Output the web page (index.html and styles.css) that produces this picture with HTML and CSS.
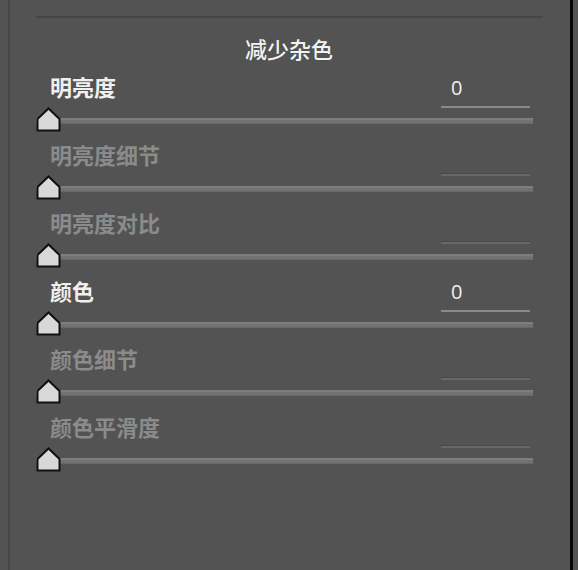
FILE: index.html
```html
<!DOCTYPE html>
<html lang="zh">
<head>
<meta charset="utf-8">
<link rel="stylesheet" href="styles.css">
</head>
<body>
<div class="frame">
  <div class="edge-left"></div>
  <div class="panel">
    <div class="sep"></div>
    <div class="title">减少杂色</div>

    <div class="row">
      <div class="head"><span class="label">明亮度</span><span class="field">0</span></div>
      <div class="slider"><div class="track"></div><svg class="thumb" viewBox="0 0 25 25" width="25" height="25"><path d="M1.5 23.5 V12 L12.5 1.5 L23.5 12 V23.5 Z" fill="#d8d8d8" stroke="#111" stroke-width="2"/></svg></div>
    </div>

    <div class="row off">
      <div class="head"><span class="label">明亮度细节</span><span class="field"></span></div>
      <div class="slider"><div class="track"></div><svg class="thumb" viewBox="0 0 25 25" width="25" height="25"><path d="M1.5 23.5 V12 L12.5 1.5 L23.5 12 V23.5 Z" fill="#d8d8d8" stroke="#111" stroke-width="2"/></svg></div>
    </div>

    <div class="row off">
      <div class="head"><span class="label">明亮度对比</span><span class="field"></span></div>
      <div class="slider"><div class="track"></div><svg class="thumb" viewBox="0 0 25 25" width="25" height="25"><path d="M1.5 23.5 V12 L12.5 1.5 L23.5 12 V23.5 Z" fill="#d8d8d8" stroke="#111" stroke-width="2"/></svg></div>
    </div>

    <div class="row">
      <div class="head"><span class="label">颜色</span><span class="field">0</span></div>
      <div class="slider"><div class="track"></div><svg class="thumb" viewBox="0 0 25 25" width="25" height="25"><path d="M1.5 23.5 V12 L12.5 1.5 L23.5 12 V23.5 Z" fill="#d8d8d8" stroke="#111" stroke-width="2"/></svg></div>
    </div>

    <div class="row off">
      <div class="head"><span class="label">颜色细节</span><span class="field"></span></div>
      <div class="slider"><div class="track"></div><svg class="thumb" viewBox="0 0 25 25" width="25" height="25"><path d="M1.5 23.5 V12 L12.5 1.5 L23.5 12 V23.5 Z" fill="#d8d8d8" stroke="#111" stroke-width="2"/></svg></div>
    </div>

    <div class="row off">
      <div class="head"><span class="label">颜色平滑度</span><span class="field"></span></div>
      <div class="slider"><div class="track"></div><svg class="thumb" viewBox="0 0 25 25" width="25" height="25"><path d="M1.5 23.5 V12 L12.5 1.5 L23.5 12 V23.5 Z" fill="#d8d8d8" stroke="#111" stroke-width="2"/></svg></div>
    </div>
  </div>
  <div class="edge-right"></div>
</div>
</body>
</html>
```

FILE: styles.css
```css
html, body {
  margin: 0;
  padding: 0;
  background: #535353;
}
body {
  width: 578px;
  height: 570px;
  overflow: hidden;
  font-family: "Noto Sans CJK SC", "Liberation Sans", sans-serif;
}
.frame {
  display: flex;
  height: 570px;
}
.edge-left {
  width: 8px;
  border-right: 2px solid #484848;
  flex: none;
}
.panel {
  width: 560px;
  flex: none;
}
.edge-right {
  width: 3px;
  background: #050505;
  flex: none;
}
.sep {
  margin: 16px 27px 0 26px;
  height: 2px;
  background: #454545;
}
.title {
  text-align: center;
  color: #f2f2f2;
  font-size: 22px;
  font-weight: 500;
  line-height: 30px;
  padding-top: 15px;
  margin-bottom: 7px;
  padding-right: 2px;
}
.row {
  height: 68px;
}
.head {
  height: 38px;
  display: flex;
  align-items: stretch;
  justify-content: space-between;
  padding: 0 40px 0 40px;
}
.label {
  color: #f0f0f0;
  font-size: 22px;
  font-weight: 700;
  line-height: 33px;
}
.field {
  width: 79px;
  padding-left: 10px;
  box-sizing: content-box;
  color: #f0f0f0;
  font-family: "Open Sans", "Liberation Sans", sans-serif;
  font-size: 20px;
  line-height: 35px;
  border-bottom: 2px solid #8a8a8a;
  height: 36px;
}
.off .label {
  color: #8b8b8b;
}
.off .field {
  border-bottom-color: #676767;
  box-shadow: 0 -2px 0 -1px #4a4a4a inset;
}
.slider {
  position: relative;
  height: 30px;
  margin: 0 37px 0 26px;
}
.track {
  position: absolute;
  left: 0;
  right: 0;
  top: 10px;
  height: 6px;
  background: #727272;
  box-shadow: inset 0 2px 0 #7e7e7e, inset 0 -1px 0 #686868;
}
.thumb {
  position: absolute;
  left: 0;
  top: -1px;
  display: block;
}
```
